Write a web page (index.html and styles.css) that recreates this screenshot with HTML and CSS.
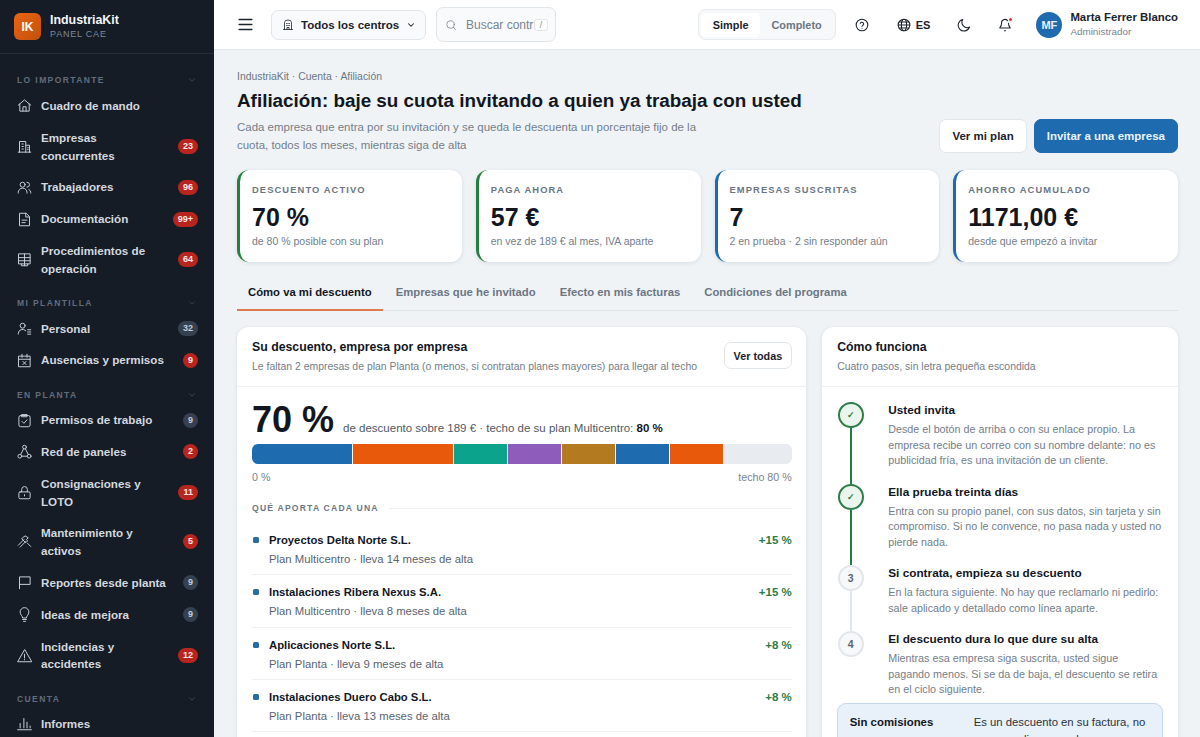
FILE: index.html
```html
<!DOCTYPE html>
<html lang="es">
<head>
    <meta charset="UTF-8">
    <meta name="viewport" content="width=device-width, initial-scale=1.0">
    <title>Afiliación - IndustriaKit</title>
    <link rel="stylesheet" href="styles.css">
</head>
<body>
<div class="app">
    <!-- Sidebar -->
    <aside class="sidebar">
        <div class="brand">
            <div class="brand-logo">IK</div>
            <div>
                <div class="brand-name">IndustriaKit</div>
                <div class="brand-sub">PANEL CAE</div>
            </div>
        </div>
        <nav class="side-nav">
            <div class="nav-section first">
                <span>LO IMPORTANTE</span>
                <svg class="nav-chevron" viewBox="0 0 24 24"><path d="M6 9l6 6 6-6"/></svg>
            </div>
            <a class="nav-item">
                <svg class="nav-icon" viewBox="0 0 24 24"><path d="M2 11.500L12 3l10 8.500"/><path d="M4.500 9.500V21h15V9.500"/><path d="M9.500 21v-7h5v7"/></svg>
                <span class="nav-text">Cuadro de mando</span>
            </a>
            <a class="nav-item">
                <svg class="nav-icon" viewBox="0 0 24 24"><path d="M4 21V4h10v17"/><path d="M14 10h6v11"/><path d="M2 21h20"/><path d="M8 8h2M8 12h2M8 16h2M17 14h1M17 17h1"/></svg>
                <span class="nav-text">Empresas concurrentes</span>
                <span class="badge red">23</span>
            </a>
            <a class="nav-item">
                <svg class="nav-icon" viewBox="0 0 24 24"><circle cx="9" cy="7.500" r="4"/><path d="M2 21v-1a7 7 0 0 1 14 0v1"/><path d="M16 3.500a4 4 0 0 1 0 8"/><path d="M19 15a6 6 0 0 1 3 5v1"/></svg>
                <span class="nav-text">Trabajadores</span>
                <span class="badge red">96</span>
            </a>
            <a class="nav-item">
                <svg class="nav-icon" viewBox="0 0 24 24"><path d="M14 2H4v20h16V8z"/><path d="M14 2v6h6"/><path d="M8 13h8M8 17h5"/></svg>
                <span class="nav-text">Documentación</span>
                <span class="badge red">99+</span>
            </a>
            <a class="nav-item">
                <svg class="nav-icon" viewBox="0 0 24 24"><path d="M3 3h18v16H3z"/><path d="M12 3v19"/><path d="M3 9h18M3 14h18"/><path d="M7 19v3h10v-3"/></svg>
                <span class="nav-text">Procedimientos de operación</span>
                <span class="badge red">64</span>
            </a>

            <div class="nav-section">
                <span>MI PLANTILLA</span>
                <svg class="nav-chevron" viewBox="0 0 24 24"><path d="M6 9l6 6 6-6"/></svg>
            </div>
            <a class="nav-item">
                <svg class="nav-icon" viewBox="0 0 24 24"><circle cx="9" cy="7.500" r="4"/><path d="M2 21v-1a7 7 0 0 1 12-4.500"/><path d="M17 14h5M17 17.500h5M17 21h5"/></svg>
                <span class="nav-text">Personal</span>
                <span class="badge grey">32</span>
            </a>
            <a class="nav-item">
                <svg class="nav-icon" viewBox="0 0 24 24"><path d="M3 5h18v17H3z"/><path d="M3 10h18"/><path d="M8 2v5M16 2v5"/><path d="M9.500 13.500l5 5M14.500 13.500l-5 5"/></svg>
                <span class="nav-text">Ausencias y permisos</span>
                <span class="badge red">9</span>
            </a>

            <div class="nav-section">
                <span>EN PLANTA</span>
                <svg class="nav-chevron" viewBox="0 0 24 24"><path d="M6 9l6 6 6-6"/></svg>
            </div>
            <a class="nav-item">
                <svg class="nav-icon" viewBox="0 0 24 24"><rect x="3" y="4" width="18" height="18" rx="3"/><path d="M8 2.500h8V6H8z"/><path d="M8 13.500l3 3 5-5.500"/></svg>
                <span class="nav-text">Permisos de trabajo</span>
                <span class="badge grey">9</span>
            </a>
            <a class="nav-item">
                <svg class="nav-icon" viewBox="0 0 24 24"><circle cx="12" cy="5" r="3"/><circle cx="4.500" cy="19.500" r="3"/><circle cx="19.500" cy="19.500" r="3"/><path d="M10.500 7.700L6 16.800M13.500 7.700l4.500 9.100M7.500 19.500h9"/></svg>
                <span class="nav-text">Red de paneles</span>
                <span class="badge red">2</span>
            </a>
            <a class="nav-item">
                <svg class="nav-icon" viewBox="0 0 24 24"><rect x="3" y="11" width="18" height="11" rx="2"/><path d="M7.500 11V7a4.500 4.500 0 0 1 9 0v4"/><path d="M12 15.500v2"/></svg>
                <span class="nav-text">Consignaciones y LOTO</span>
                <span class="badge red">11</span>
            </a>
            <a class="nav-item">
                <svg class="nav-icon" viewBox="0 0 24 24"><path d="M2 18l9-9"/><path d="M5 21l9-9"/><path d="M9 6l4-3 5 3-3 3 2 2-3 3-6-6z"/><path d="M17 15l5 5"/></svg>
                <span class="nav-text">Mantenimiento y activos</span>
                <span class="badge red">5</span>
            </a>
            <a class="nav-item">
                <svg class="nav-icon" viewBox="0 0 24 24"><path d="M4 22V3h17v12H4"/></svg>
                <span class="nav-text">Reportes desde planta</span>
                <span class="badge grey">9</span>
            </a>
            <a class="nav-item">
                <svg class="nav-icon" viewBox="0 0 24 24"><path d="M9 17c0-2.500-4-4.500-4-9a7 7 0 0 1 14 0c0 4.500-4 6.500-4 9z"/><path d="M9 20h6M10.500 23h3"/></svg>
                <span class="nav-text">Ideas de mejora</span>
                <span class="badge grey">9</span>
            </a>
            <a class="nav-item">
                <svg class="nav-icon" viewBox="0 0 24 24"><path d="M12 3L1 22h22z"/><path d="M12 10v6M12 18.500v.5"/></svg>
                <span class="nav-text">Incidencias y accidentes</span>
                <span class="badge red">12</span>
            </a>

            <div class="nav-section">
                <span>CUENTA</span>
                <svg class="nav-chevron" viewBox="0 0 24 24"><path d="M6 9l6 6 6-6"/></svg>
            </div>
            <a class="nav-item">
                <svg class="nav-icon" viewBox="0 0 24 24"><path d="M1 22h22"/><path d="M5 19v-7M11 19V4M16 19v-9M21 19v-3"/></svg>
                <span class="nav-text">Informes</span>
            </a>
        </nav>
    </aside>

    <div class="main">
        <!-- Top bar -->
        <header class="topbar">
            <button class="menu-btn">
                <svg viewBox="0 0 24 24"><path d="M3 5h18M3 12h18M3 19h18"/></svg>
            </button>
            <button class="center-select">
                <svg class="center-icon" viewBox="0 0 24 24"><path d="M5 21V7a7 5 0 0 1 14 0v14"/><path d="M3 21h18"/><path d="M9 9h1.500M13.500 9H15M9 13h1.500M13.500 13H15"/><path d="M10 21v-4h4v4"/></svg>
                <span>Todos los centros</span>
                <svg class="center-chevron" viewBox="0 0 24 24"><path d="M6 9l6 6 6-6"/></svg>
            </button>
            <div class="search">
                <svg viewBox="0 0 24 24"><circle cx="11" cy="11" r="7.500"/><path d="M21 21l-4.500-4.500"/></svg>
                <span class="search-text">Buscar contr</span>
                <span class="search-key">/</span>
            </div>
            <div class="mode-toggle">
                <span class="mode active">Simple</span>
                <span class="mode">Completo</span>
            </div>
            <svg class="top-icon help" viewBox="0 0 24 24"><circle cx="12" cy="12" r="10"/><path d="M9 9.200a3 3 0 0 1 5.800 1c0 2-2.800 2.500-2.800 4"/><path d="M12 17.500v.2"/></svg>
            <div class="lang">
                <svg class="top-icon" viewBox="0 0 24 24"><circle cx="12" cy="12" r="10"/><path d="M2 12h20M3.500 7h17M3.500 17h17"/><ellipse cx="12" cy="12" rx="4.500" ry="10"/></svg>
                <span>ES</span>
            </div>
            <svg class="top-icon moon" viewBox="0 0 24 24"><path d="M10 2.500a9 9 0 0 0 11.500 13A10 10 0 1 1 10 2.500z"/></svg>
            <div class="bell">
                <svg class="top-icon" viewBox="0 0 24 24"><path d="M16.500 4.500A6 6 0 0 0 6 9c0 5-2 6.500-3 8h18c-1-1.500-3-3-3-8"/><path d="M11 22h2"/></svg>
                <span class="bell-dot"></span>
            </div>
            <div class="user">
                <div class="avatar">MF</div>
                <div>
                    <div class="user-name">Marta Ferrer Blanco</div>
                    <div class="user-role">Administrador</div>
                </div>
            </div>
        </header>

        <main class="content">
            <div class="crumbs">IndustriaKit · Cuenta · Afiliación</div>
            <div class="page-head">
                <div>
                    <h1>Afiliación: baje su cuota invitando a quien ya trabaja con usted</h1>
                    <p class="page-desc">Cada empresa que entra por su invitación y se queda le descuenta un porcentaje fijo de la cuota, todos los meses, mientras siga de alta</p>
                </div>
                <div class="page-actions">
                    <button class="btn">Ver mi plan</button>
                    <button class="btn primary">Invitar a una empresa</button>
                </div>
            </div>

            <div class="stats">
                <div class="stat green">
                    <div class="stat-label">DESCUENTO ACTIVO</div>
                    <div class="stat-value">70 %</div>
                    <div class="stat-sub">de 80 % posible con su plan</div>
                </div>
                <div class="stat green">
                    <div class="stat-label">PAGA AHORA</div>
                    <div class="stat-value">57 €</div>
                    <div class="stat-sub">en vez de 189 € al mes, IVA aparte</div>
                </div>
                <div class="stat blue">
                    <div class="stat-label">EMPRESAS SUSCRITAS</div>
                    <div class="stat-value">7</div>
                    <div class="stat-sub">2 en prueba · 2 sin responder aún</div>
                </div>
                <div class="stat blue">
                    <div class="stat-label">AHORRO ACUMULADO</div>
                    <div class="stat-value">1171,00 €</div>
                    <div class="stat-sub">desde que empezó a invitar</div>
                </div>
            </div>

            <div class="tabs">
                <a class="tab active">Cómo va mi descuento</a>
                <a class="tab">Empresas que he invitado</a>
                <a class="tab">Efecto en mis facturas</a>
                <a class="tab">Condiciones del programa</a>
            </div>

            <div class="columns">
                <section class="panel">
                    <div class="panel-head">
                        <div>
                            <h2>Su descuento, empresa por empresa</h2>
                            <div class="panel-sub">Le faltan 2 empresas de plan Planta (o menos, si contratan planes mayores) para llegar al techo</div>
                        </div>
                        <button class="btn small">Ver todas</button>
                    </div>
                    <div class="panel-body">
                        <div class="big-line">
                            <span class="big-num">70 %</span>
                            <span class="big-text">de descuento sobre 189 € · techo de su plan Multicentro: <b>80 %</b></span>
                        </div>
                        <div class="bar">
                            <span class="seg seg-blue wide"></span>
                            <span class="seg seg-orange wide"></span>
                            <span class="seg seg-teal"></span>
                            <span class="seg seg-purple"></span>
                            <span class="seg seg-ochre"></span>
                            <span class="seg seg-blue"></span>
                            <span class="seg seg-orange"></span>
                        </div>
                        <div class="bar-labels"><span>0 %</span><span>techo 80 %</span></div>
                        <div class="sub-title"><span>QUÉ APORTA CADA UNA</span></div>
                        <ul class="company-list">
                            <li>
                                <span class="dot"></span>
                                <div class="company-info">
                                    <div class="company-name">Proyectos Delta Norte S.L.</div>
                                    <div class="company-plan">Plan Multicentro · lleva 14 meses de alta</div>
                                </div>
                                <span class="gain">+15 %</span>
                            </li>
                            <li>
                                <span class="dot"></span>
                                <div class="company-info">
                                    <div class="company-name">Instalaciones Ribera Nexus S.A.</div>
                                    <div class="company-plan">Plan Multicentro · lleva 8 meses de alta</div>
                                </div>
                                <span class="gain">+15 %</span>
                            </li>
                            <li>
                                <span class="dot"></span>
                                <div class="company-info">
                                    <div class="company-name">Aplicaciones Norte S.L.</div>
                                    <div class="company-plan">Plan Planta · lleva 9 meses de alta</div>
                                </div>
                                <span class="gain">+8 %</span>
                            </li>
                            <li>
                                <span class="dot"></span>
                                <div class="company-info">
                                    <div class="company-name">Instalaciones Duero Cabo S.L.</div>
                                    <div class="company-plan">Plan Planta · lleva 13 meses de alta</div>
                                </div>
                                <span class="gain">+8 %</span>
                            </li>
                        </ul>
                    </div>
                </section>

                <section class="panel">
                    <div class="panel-head">
                        <div>
                            <h2>Cómo funciona</h2>
                            <div class="panel-sub">Cuatro pasos, sin letra pequeña escondida</div>
                        </div>
                    </div>
                    <div class="panel-body steps-body">
                        <div class="step done">
                            <div class="step-mark">✓</div>
                            <div>
                                <div class="step-title">Usted invita</div>
                                <div class="step-text">Desde el botón de arriba o con su enlace propio. La empresa recibe un correo con su nombre delante: no es publicidad fría, es una invitación de un cliente.</div>
                            </div>
                        </div>
                        <div class="step done">
                            <div class="step-mark">✓</div>
                            <div>
                                <div class="step-title">Ella prueba treinta días</div>
                                <div class="step-text">Entra con su propio panel, con sus datos, sin tarjeta y sin compromiso. Si no le convence, no pasa nada y usted no pierde nada.</div>
                            </div>
                        </div>
                        <div class="step">
                            <div class="step-mark">3</div>
                            <div>
                                <div class="step-title">Si contrata, empieza su descuento</div>
                                <div class="step-text">En la factura siguiente. No hay que reclamarlo ni pedirlo: sale aplicado y detallado como línea aparte.</div>
                            </div>
                        </div>
                        <div class="step last">
                            <div class="step-mark">4</div>
                            <div>
                                <div class="step-title">El descuento dura lo que dure su alta</div>
                                <div class="step-text">Mientras esa empresa siga suscrita, usted sigue pagando menos. Si se da de baja, el descuento se retira en el ciclo siguiente.</div>
                            </div>
                        </div>
                        <div class="note">
                            <b>Sin comisiones</b>
                            <span>Es un descuento en su factura, no dinero a cobrar.</span>
                        </div>
                    </div>
                </section>
            </div>
        </main>
    </div>
</div>
</body>
</html>
```

FILE: styles.css
```css
* {
    box-sizing: border-box;
}

html, body {
    margin: 0;
    padding: 0;
    height: 100%;
    overflow: hidden;
}

body {
    font-family: "Liberation Sans", Arial, sans-serif;
    background-color: #eff3f6;
    color: #12171f;
}

svg {
    fill: none;
    stroke: currentColor;
    stroke-width: 1.6;
    stroke-linecap: round;
    stroke-linejoin: round;
    flex-shrink: 0;
}

button {
    font-family: inherit;
}

.app {
    display: flex;
    height: 737px;
    overflow: hidden;
}

/* Sidebar */
.sidebar {
    width: 214px;
    flex-shrink: 0;
    background-color: #151c26;
    overflow: hidden;
}

.brand {
    display: flex;
    align-items: center;
    gap: 9px;
    height: 54px;
    padding: 0 14px;
    border-bottom: 1px solid #262e39;
}

.brand-logo {
    width: 27px;
    height: 27px;
    border-radius: 6px;
    background: linear-gradient(135deg, #ea6512, #c2500c);
    color: #fff;
    font-size: 12px;
    font-weight: bold;
    display: flex;
    align-items: center;
    justify-content: center;
}

.brand-name {
    color: #f4f6f8;
    font-size: 12.4px;
    font-weight: bold;
    line-height: 15px;
}

.brand-sub {
    color: #7d8897;
    font-size: 9px;
    letter-spacing: 0.8px;
    line-height: 13px;
}

.nav-section {
    display: flex;
    justify-content: space-between;
    align-items: center;
    height: 14px;
    margin: 13px 17px 3px;
    color: #626d7b;
    font-size: 8.5px;
    font-weight: bold;
    letter-spacing: 1.4px;
}

.nav-section.first {
    margin-top: 19px;
    margin-bottom: 4px;
}

.nav-chevron {
    width: 10px;
    height: 10px;
    color: #4e5866;
}

.nav-item {
    display: flex;
    align-items: center;
    gap: 9px;
    margin-bottom: 2px;
    padding: 6.2px 16px 6.2px 17px;
    color: #d3d8df;
    font-size: 11.65px;
    font-weight: bold;
    line-height: 17.5px;
}

.nav-icon {
    width: 15px;
    height: 15px;
    color: #c6ccd4;
}

.nav-text {
    flex: 1;
    min-width: 0;
}

.badge {
    min-width: 15px;
    padding: 0 5px;
    border-radius: 8px;
    font-size: 9px;
    font-weight: bold;
    line-height: 15px;
    text-align: center;
}

.badge.red {
    background-color: #b8251f;
    color: #fbe9e7;
}

.badge.grey {
    background-color: #354151;
    color: #c4cbd5;
}

/* Top bar */
.main {
    flex: 1;
    min-width: 0;
    display: flex;
    flex-direction: column;
}

.topbar {
    display: flex;
    align-items: center;
    height: 50px;
    flex-shrink: 0;
    padding: 0 22px 0 23px;
    background-color: #fff;
    border-bottom: 1px solid #e2e7ec;
}

.menu-btn {
    width: 17px;
    height: 17px;
    padding: 0;
    margin-right: 17px;
    border: 0;
    background: none;
    color: #1c232d;
}

.menu-btn svg {
    display: block;
    width: 17px;
    height: 17px;
    stroke-width: 2;
}

.center-select {
    display: flex;
    align-items: center;
    width: 155px;
    height: 30px;
    margin-right: 10px;
    padding: 0 10px;
    background-color: #f8fafb;
    border: 1px solid #e1e6eb;
    border-radius: 7px;
    color: #1c232d;
    font-size: 11.5px;
    font-weight: bold;
    white-space: nowrap;
}

.center-icon {
    width: 12px;
    height: 12px;
    margin-right: 7px;
}

.center-chevron {
    width: 10px;
    height: 10px;
    margin-left: 7px;
    stroke-width: 2.5;
}

.search {
    display: flex;
    align-items: center;
    width: 120px;
    height: 35px;
    padding: 0 7px 0 8px;
    background-color: #f8fafb;
    border: 1px solid #e1e6eb;
    border-radius: 7px;
    color: #7a8490;
    font-size: 12px;
}

.search svg {
    width: 12px;
    height: 12px;
    margin-right: 9px;
}

.search-text {
    width: 68px;
    overflow: hidden;
    white-space: nowrap;
}

.search-key {
    width: 14px;
    height: 12px;
    background-color: #fff;
    border: 1px solid #e1e6eb;
    border-radius: 3px;
    font-size: 8.5px;
    line-height: 10px;
    text-align: center;
}

.mode-toggle {
    display: flex;
    height: 31px;
    margin-left: auto;
    padding: 2.5px 2px;
    background-color: #f6f8fa;
    border: 1px solid #e7ebef;
    border-radius: 7px;
    font-size: 10.9px;
    font-weight: bold;
}

.mode {
    padding: 0 11.5px;
    line-height: 24px;
    color: #6c7683;
}

.mode.active {
    background-color: #fff;
    border-radius: 5px;
    color: #1c232d;
}

.top-icon {
    display: block;
    width: 14px;
    height: 14px;
    color: #1c232d;
    stroke-width: 1.8;
}

.help {
    margin-left: 19px;
}

.lang {
    display: flex;
    align-items: center;
    gap: 5px;
    margin-left: 27.5px;
    color: #1c232d;
    font-size: 11px;
    font-weight: bold;
}

.moon {
    margin-left: 27px;
}

.bell {
    position: relative;
    margin-left: 27px;
}

.bell-dot {
    position: absolute;
    top: 0;
    right: 0;
    width: 3px;
    height: 3px;
    border-radius: 50%;
    background-color: #d8352a;
}

.user {
    display: flex;
    align-items: center;
    gap: 8px;
    margin-left: 24px;
}

.avatar {
    width: 26px;
    height: 26px;
    border-radius: 50%;
    background-color: #1e6bb0;
    color: #e9f1f8;
    font-size: 11px;
    font-weight: bold;
    line-height: 26px;
    text-align: center;
}

.user-name {
    color: #1c232d;
    font-size: 11.4px;
    font-weight: bold;
    line-height: 15px;
}

.user-role {
    color: #7a8490;
    font-size: 9.9px;
    line-height: 14px;
}

/* Content */
.content {
    flex: 1;
    min-height: 0;
    overflow: hidden;
    padding: 19px 22px 0 23px;
}

.crumbs {
    color: #6c7683;
    font-size: 10.4px;
    line-height: 15px;
}

.page-head {
    display: flex;
    justify-content: space-between;
    align-items: flex-end;
    margin-top: 4px;
}

h1 {
    margin: 0;
    font-size: 18.87px;
    line-height: 26px;
    font-weight: bold;
    white-space: nowrap;
}

.page-desc {
    width: 480px;
    margin: 4px 0 0;
    color: #747e8a;
    font-size: 11.47px;
    line-height: 18px;
}

.page-actions {
    display: flex;
    gap: 7px;
    margin-bottom: 1px;
}

.btn {
    height: 34px;
    padding: 0 12px;
    background-color: #fff;
    border: 1px solid #e1e6eb;
    border-radius: 7px;
    color: #1c232d;
    font-size: 11.5px;
    font-weight: bold;
}

.btn.primary {
    background-color: #1e6bb0;
    border-color: #1e6bb0;
    color: #eaf2f9;
}

.btn.small {
    height: 27px;
    padding: 0 8.5px;
    font-size: 10.8px;
}

.stats {
    display: grid;
    grid-template-columns: repeat(4, 1fr);
    gap: 14px;
    margin-top: 16px;
}

.stat {
    height: 92px;
    padding: 13px 12px;
    background-color: #fff;
    border-left: 3px solid #24803f;
    border-radius: 12px;
    box-shadow: 0 1px 4px rgba(20, 30, 45, 0.1);
}

.stat.blue {
    border-left-color: #1e6bb0;
}

.stat-label {
    color: #6c7683;
    font-size: 9.35px;
    font-weight: bold;
    letter-spacing: 1.1px;
    line-height: 14px;
}

.stat-value {
    margin-top: 4px;
    font-size: 25px;
    font-weight: bold;
    line-height: 32px;
}

.stat-sub {
    margin-top: 1px;
    color: #747e8a;
    font-size: 10.5px;
    line-height: 15px;
}

.tabs {
    display: flex;
    gap: 2px;
    margin-top: 13px;
    border-bottom: 1px solid #dfe4e9;
}

.tab {
    padding: 1px 11px 0;
    color: #6c7683;
    font-size: 11.3px;
    font-weight: bold;
    line-height: 33px;
    margin-bottom: -1px;
    border-bottom: 2px solid transparent;
}

.tab.active {
    color: #12171f;
    border-bottom-color: #de7b4c;
}

.columns {
    display: grid;
    grid-template-columns: 1.6fr 1fr;
    gap: 16px;
    align-items: start;
    margin-top: 16px;
}

.panel {
    min-height: 430px;
    background-color: #fff;
    border-radius: 12px;
    box-shadow: 0 1px 4px rgba(20, 30, 45, 0.1);
    overflow: hidden;
}

.panel-head {
    display: flex;
    justify-content: space-between;
    align-items: center;
    height: 60px;
    padding: 0 14.5px 2px 15px;
    border-bottom: 1px solid #eef1f4;
}

h2 {
    margin: 0;
    font-size: 12.3px;
    font-weight: bold;
    line-height: 18px;
}

.panel-sub {
    margin-top: 3px;
    color: #747e8a;
    font-size: 10.45px;
    line-height: 15px;
}

.panel-body {
    padding: 10px 14.5px 0 15px;
}

.big-line {
    display: flex;
    align-items: baseline;
    gap: 9px;
    height: 46px;
}

.big-num {
    font-size: 36px;
    font-weight: bold;
    line-height: 46px;
}

.big-text {
    color: #4f5965;
    font-size: 11.5px;
}

.big-text b {
    color: #12171f;
}

.bar {
    display: flex;
    height: 20px;
    margin-top: 1px;
    background-color: #e8ecf1;
    border-radius: 6px;
    overflow: hidden;
}

.seg {
    width: 54px;
    border-right: 1px solid #fff;
}

.seg.wide {
    width: 101px;
}

.seg-blue { background-color: #1e6bb0; }
.seg-orange { background-color: #e8590c; }
.seg-teal { background-color: #0ca38c; }
.seg-purple { background-color: #8e5cbb; }
.seg-ochre { background-color: #b37a1f; }

.bar-labels {
    display: flex;
    justify-content: space-between;
    margin-top: 6px;
    color: #7a8490;
    font-size: 10.7px;
    line-height: 15px;
}

.sub-title {
    display: flex;
    align-items: center;
    gap: 10px;
    margin-top: 17px;
    color: #6c7683;
    font-size: 8.6px;
    font-weight: bold;
    letter-spacing: 1.2px;
    line-height: 13px;
}

.sub-title::after {
    content: "";
    flex: 1;
    height: 1px;
    background-color: #eef1f4;
}

.company-list {
    list-style: none;
    margin: 8px 0 0;
    padding: 0;
}

.company-list li {
    display: flex;
    align-items: flex-start;
    height: 52.3px;
    padding-top: 9px;
    border-bottom: 1px solid #eef1f4;
}

.dot {
    width: 6px;
    height: 6px;
    margin: 5px 10px 0 1px;
    border-radius: 1.5px;
    background-color: #2a6aa5;
}

.company-info {
    flex: 1;
}

.company-name {
    font-size: 11.3px;
    font-weight: bold;
    line-height: 17px;
}

.company-plan {
    margin-top: 2px;
    color: #5a6470;
    font-size: 11.33px;
    line-height: 16px;
}

.gain {
    color: #2e7d46;
    font-size: 11.5px;
    font-weight: bold;
    line-height: 17px;
}

/* Steps */
.steps-body {
    padding-top: 15px;
    padding-left: 15.5px;
    padding-right: 15.5px;
}

.step {
    position: relative;
    display: flex;
    gap: 24.5px;
    padding-bottom: 15px;
}

.step::before {
    content: "";
    position: absolute;
    top: 26px;
    bottom: 0;
    left: 12px;
    width: 2px;
    background-color: #e1e6eb;
}

.step.done::before {
    background-color: #24803f;
}

.step.last {
    padding-bottom: 5.5px;
}

.step.last::before {
    display: none;
}

.step-mark {
    width: 26px;
    height: 26px;
    flex-shrink: 0;
    border: 2px solid #e1e6eb;
    border-radius: 50%;
    background-color: #f6f8fa;
    color: #5a6470;
    font-size: 10.5px;
    font-weight: bold;
    line-height: 22px;
    text-align: center;
}

.done .step-mark {
    border-color: #2e7d46;
    background-color: #eaf5ed;
    color: #24803f;
    font-size: 9px;
}

.step-title {
    font-size: 11.8px;
    font-weight: bold;
    line-height: 16px;
}

.step-text {
    margin-top: 4px;
    color: #747e8a;
    font-size: 10.75px;
    line-height: 15.5px;
}

.note {
    display: flex;
    justify-content: space-between;
    gap: 14px;
    margin-left: -1px;
    padding: 10px 14px 10px 12px;
    background-color: #e8f0f9;
    border: 1px solid #c9d8e8;
    border-radius: 9px;
    font-size: 11.4px;
    line-height: 16px;
}

.note b {
    white-space: nowrap;
}

.note span {
    width: 176px;
    font-size: 11.3px;
    line-height: 17px;
    text-align: center;
    color: #2b333e;
}
```
